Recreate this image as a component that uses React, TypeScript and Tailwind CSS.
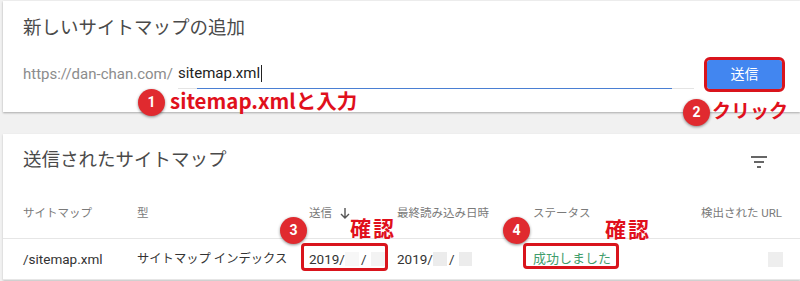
const FONT = "font-['Roboto','Noto_Sans_CJK_JP',sans-serif]";

function Badge({ n, className }: { n: number; className: string }) {
  return (
    <div
      className={`absolute flex h-[27px] w-[27px] items-center justify-center rounded-full bg-[#e02a2f] text-[14px] font-bold text-white shadow-[0_1px_3px_rgba(0,0,0,0.45)] ${className}`}
    >
      {n}
    </div>
  );
}

function Note({ text, className }: { text: string; className: string }) {
  return (
    <div
      className={`absolute font-['Noto_Sans_CJK_JP',sans-serif] font-bold leading-none text-[#e0101c] ${className}`}
    >
      {text}
    </div>
  );
}

function Blur({ w }: { w: string }) {
  return <span className={`inline-block h-[14px] align-middle ${w}`} />;
}

export default function App() {
  return (
    <div className={`relative h-[281px] w-[800px] overflow-hidden bg-[#f1f1f1] pl-[3px] pt-[1px] ${FONT}`}>
      {/* Add sitemap card */}
      <div className="h-[111px] bg-white pl-[20px] pr-[18px] pt-[15px] shadow-[0_1px_2px_rgba(0,0,0,0.3)]">
        <h2 className="text-[18.5px] leading-[24px] text-[#4a4a4a]">新しいサイトマップの追加</h2>
        <div className="mt-[19px] flex items-center">
          <span className="text-[15px] leading-[20px] text-[#8c8c8c]">https://dan-chan.com/</span>
          <div className="relative ml-[5px] mr-[13px] flex h-[30px] flex-1 items-center border-b border-[#e4e4e4]">
            <span className="text-[15px] text-[#222]">sitemap.xml</span>
            <span className="ml-[1px] h-[17px] w-[1px] bg-[#222]" />
            <div className="absolute bottom-[-1px] left-[19px] right-[22px] h-[1.5px] bg-[#4a7fd3]" />
          </div>
          <button className="flex h-[29px] w-[75px] items-center justify-center rounded-[3px] bg-[#4286f0] text-[14px] text-white outline outline-[3px] outline-[#d9141c]">
            送信
          </button>
        </div>
      </div>

      {/* Submitted sitemaps card */}
      <div className="mt-[22px] bg-white pl-[20px] pr-[18px] pt-[14px] shadow-[0_1px_2px_rgba(0,0,0,0.2)]">
        <div className="flex items-center justify-between">
          <h2 className="text-[18.5px] leading-[24px] text-[#4a4a4a]">送信されたサイトマップ</h2>
          <svg width="16" height="12" viewBox="0 0 16 12" className="mr-[15px] mt-[4px]">
            <rect x="0" y="0" width="16" height="2" fill="#666" />
            <rect x="3" y="5" width="10" height="2" fill="#666" />
            <rect x="6" y="10" width="4" height="2" fill="#666" />
          </svg>
        </div>
        <div className="-ml-[20px] -mr-[18px] mt-[17px]">
          <div className="grid h-[50px] grid-cols-[114px_172px_88px_136px_1fr_auto] items-center border-b border-[#e6e6e6] pl-[20px] pr-[18px] text-[11.5px] text-[#7a7a7a]">
            <span>サイトマップ</span>
            <span>型</span>
            <span className="flex items-center gap-[8px]">
              送信
              <svg width="10" height="11" viewBox="0 0 10 11">
                <path d="M5 0v9M1 6l4 4 4-4" stroke="#555" strokeWidth="1.4" fill="none" />
              </svg>
            </span>
            <span>最終読み込み日時</span>
            <span>ステータス</span>
            <span>検出された URL</span>
          </div>
          <div className="grid h-[41px] grid-cols-[114px_172px_88px_136px_1fr_auto] items-center border-b border-[#e6e6e6] pl-[20px] pr-[18px] text-[12.3px] text-[#333]">
            <span className="text-[13.5px]">/sitemap.xml</span>
            <span className="whitespace-nowrap">サイトマップ インデックス</span>
            <span className="flex items-center text-[13.5px]">
              2019/<Blur w="w-[14px] bg-[#f7f7f7]" />
              <span className="ml-[2px]">/</span>
              <Blur w="ml-[4px] w-[14px] bg-[#f3f3f3]" />
            </span>
            <span className="flex items-center text-[13.5px]">
              2019/<Blur w="w-[14px] bg-[#ececec]" />
              <span className="ml-[2px]">/</span>
              <Blur w="ml-[4px] w-[13px] bg-[#ececec]" />
            </span>
            <span className="text-[13px] text-[#3f9d6c]">成功しました</span>
            <span className="mr-[-1px] inline-block h-[15px] w-[15px] bg-[#eeeeee]" />
          </div>
        </div>
      </div>

      {/* annotations */}
      <div className="absolute left-[301px] top-[243px] h-[28px] w-[87px] rounded-[4px] border-[3px] border-[#d9141c]" />
      <div className="absolute left-[523px] top-[243px] h-[26px] w-[96px] rounded-[4px] border-[3px] border-[#d9141c]" />

      <Badge n={1} className="left-[138px] top-[89px]" />
      <Note text="sitemap.xmlと入力" className="left-[170px] top-[90px] text-[20.5px]" />
      <Badge n={2} className="left-[683px] top-[99px]" />
      <Note text="クリック" className="left-[712px] top-[100px] text-[19px]" />
      <Badge n={3} className="left-[280px] top-[217px]" />
      <Note text="確認" className="left-[350px] top-[217px] text-[21px] tracking-[2px]" />
      <Badge n={4} className="left-[503px] top-[217px]" />
      <Note text="確認" className="left-[605px] top-[218px] text-[21px] tracking-[2px]" />
    </div>
  );
}
